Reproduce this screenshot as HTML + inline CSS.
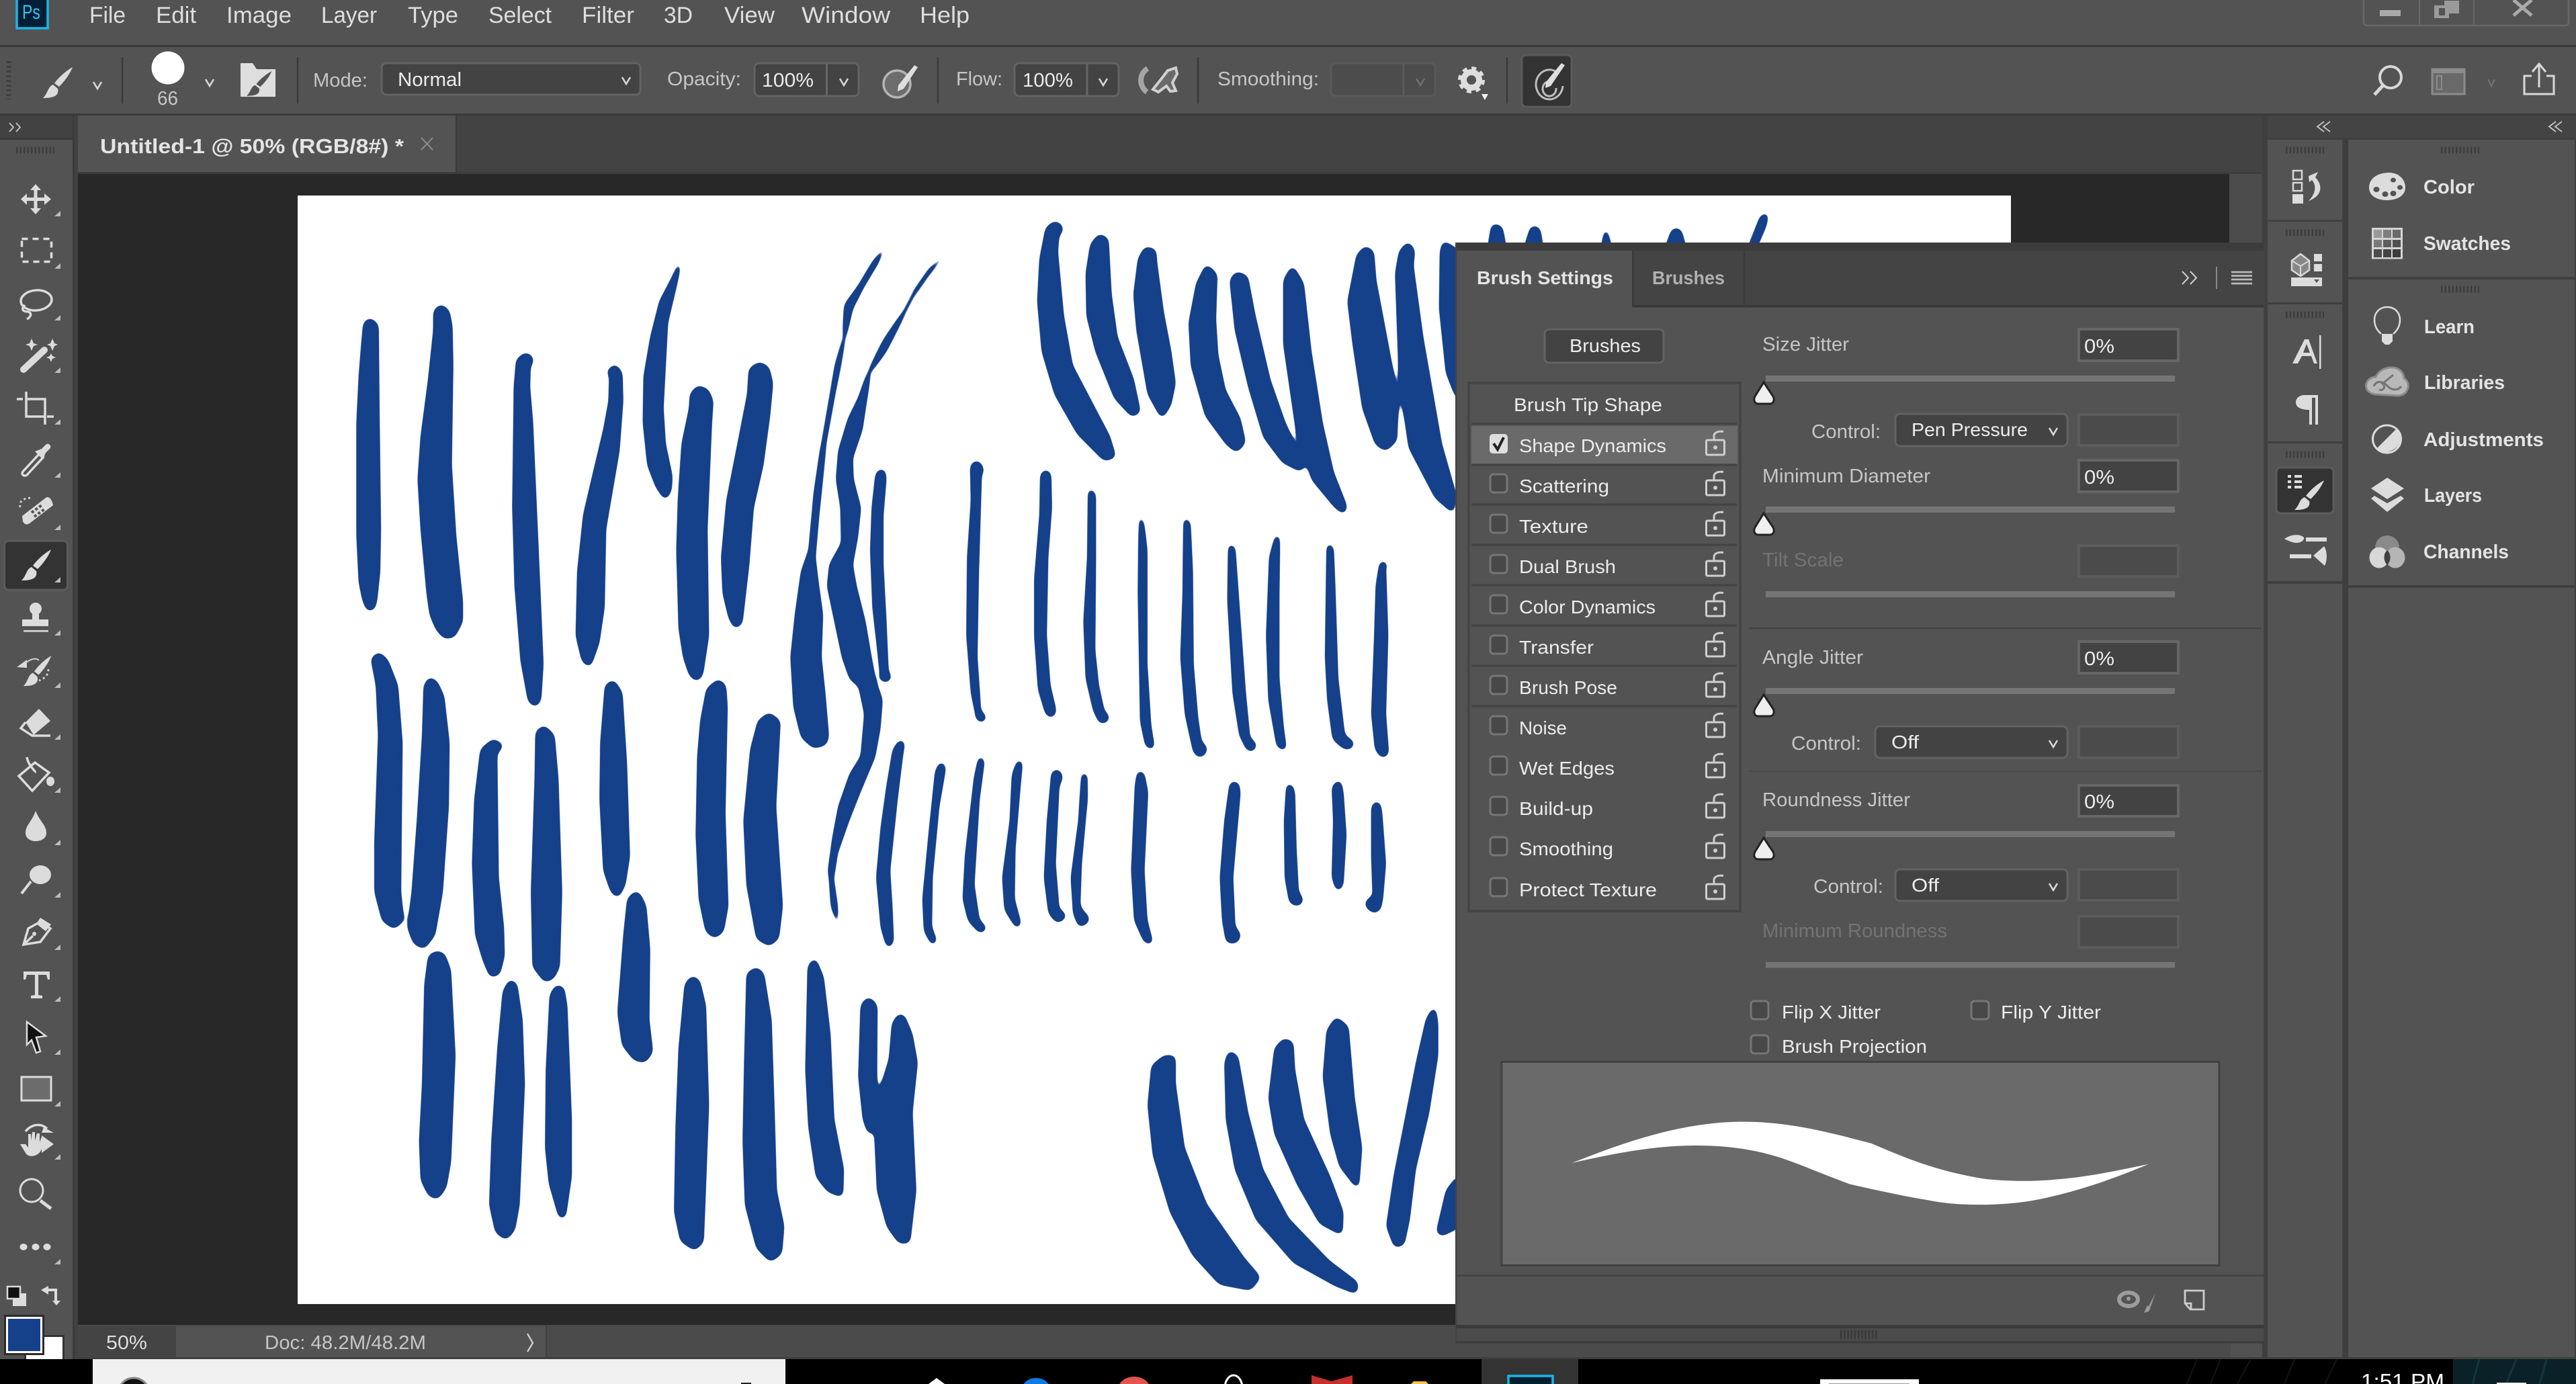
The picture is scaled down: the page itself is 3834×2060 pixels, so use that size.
<!DOCTYPE html>
<html lang="en"><head><meta charset="utf-8"><title>Photoshop - Brush Settings</title>
<style>
html,body{margin:0;padding:0;background:#535353;width:3834px;height:2060px;overflow:hidden}
svg{display:block}
text{font-family:"Liberation Sans",sans-serif;font-size:28px;fill:#d4d4d4;white-space:pre}
.m{font-size:34px;fill:#dedede}
.o{font-size:29px;fill:#c6c6c6}
.w{font-size:29px;fill:#ececec}
.b{font-weight:bold;font-size:29px;fill:#e4e4e4}
.d{fill:#737373}
.ic{fill:#dcdcdc}
.ln{fill:none;stroke:#dcdcdc;stroke-width:3.5}
.sel{fill:#434343;stroke:#636363;stroke-width:3}
.inp{fill:#434343;stroke:#666;stroke-width:4}
.dim{fill:#4b4b4b;stroke:#5c5c5c;stroke-width:4}
.sl{fill:#757575}
.cb{fill:#484848;stroke:#767676;stroke-width:3}
.grip{stroke:#3d3d3d;stroke-width:10;stroke-dasharray:2.5 3;fill:none}
.tri{fill:#bdbdbd}
.st polygon{fill:#15408a;stroke:#15408a;stroke-width:3;stroke-linejoin:round}
.st circle{fill:#15408a}
</style></head><body>
<svg width="3834" height="2060" viewBox="0 0 3834 2060" xmlns="http://www.w3.org/2000/svg">
<defs>
<g id="br"><path d="M44 0C35 5 24 14 17 24L24 29C33 20 40 10 44 0Z"/><path d="M15 26C7 29 8 38 0 46C10 46 25 45 22 32Z"/></g>
<g id="lock"><rect x="1.5" y="14" width="27" height="22" rx="2" fill="none" stroke="#cfcfcf" stroke-width="3"/><circle cx="15" cy="25" r="3" fill="#cfcfcf"/><path d="M13 14V8C13 3 19 0 27 1.5" fill="none" stroke="#cfcfcf" stroke-width="3"/></g>
<path id="th" d="M16 1L3 22C0 28 3 33 8 33H25C30 33 33 28 30 22Z" fill="#efefef" stroke="#222" stroke-width="3"/>
<path id="ch" d="M-6-5L0 5L6-5" fill="none" stroke="#d6d6d6" stroke-width="2.6"/>
<clipPath id="cv"><rect x="443" y="291" width="2550" height="1650"/></clipPath>
<filter id="sm" filterUnits="userSpaceOnUse" x="443" y="291" width="2550" height="1650" color-interpolation-filters="sRGB">
<feGaussianBlur stdDeviation="5"/>
<feComponentTransfer><feFuncA type="linear" slope="14" intercept="-5.1"/></feComponentTransfer>
</filter>
</defs>

<rect width="3834" height="2060" fill="#535353"/>
<rect y="67" width="3834" height="3" fill="#3a3a3a"/>
<rect y="169" width="3834" height="3.5" fill="#3a3a3a"/>

<!-- menu -->
<rect x="25" y="-4" width="46" height="46" fill="#001e36" stroke="#1cb5e8" stroke-width="3.5"/>
<text x="33" y="28" textLength="27" lengthAdjust="spacingAndGlyphs" style="font-size:30px;fill:#31c5f0">Ps</text>
<text class="m" x="133" y="34" textLength="54" lengthAdjust="spacingAndGlyphs">File</text>
<text class="m" x="232" y="34" textLength="60" lengthAdjust="spacingAndGlyphs">Edit</text>
<text class="m" x="337" y="34" textLength="97" lengthAdjust="spacingAndGlyphs">Image</text>
<text class="m" x="478" y="34" textLength="83" lengthAdjust="spacingAndGlyphs">Layer</text>
<text class="m" x="607" y="34" textLength="75" lengthAdjust="spacingAndGlyphs">Type</text>
<text class="m" x="727" y="34" textLength="94" lengthAdjust="spacingAndGlyphs">Select</text>
<text class="m" x="866" y="34" textLength="78" lengthAdjust="spacingAndGlyphs">Filter</text>
<text class="m" x="988" y="34" textLength="43" lengthAdjust="spacingAndGlyphs">3D</text>
<text class="m" x="1078" y="34" textLength="75" lengthAdjust="spacingAndGlyphs">View</text>
<text class="m" x="1193" y="34" textLength="132" lengthAdjust="spacingAndGlyphs">Window</text>
<text class="m" x="1369" y="34" textLength="74" lengthAdjust="spacingAndGlyphs">Help</text>

<!-- window controls -->
<path d="M3518 0V32Q3518 38 3524 38H3817Q3823 38 3823 32V0" fill="none" stroke="#676767" stroke-width="2.5"/>
<path d="M3601 0V38M3682 0V38" stroke="#676767" stroke-width="2"/>
<rect x="3542" y="15" width="31" height="9" fill="#aaa"/>
<path d="M3623 8h22v19h-22zM3638 1h22v19h-15V8h-7z" fill="#9a9a9a"/><rect x="3630" y="12" width="9" height="11" fill="#535353"/>
<path d="M3741 0L3768 23M3768 0L3741 23" stroke="#aaa" stroke-width="5"/>

<!-- options bar -->
<path d="M13 91V148" stroke="#3f3f3f" stroke-width="7" stroke-dasharray="3 4"/>
<g class="ic"><use href="#br" transform="translate(64,100)"/></g>
<use href="#ch" transform="translate(145,127)"/>
<path d="M182 85V154M443 85V154M1396 85V154M1783 85V154M2243 85V154" stroke="#3a3a3a" stroke-width="2.5"/>
<ellipse cx="250" cy="101" rx="24.5" ry="24.5" fill="#fff"/>
<text class="o" x="234" y="156" textLength="31" lengthAdjust="spacingAndGlyphs">66</text>
<use href="#ch" transform="translate(312,123)"/>
<path d="M358 94H376L382 103H410V144H358Z" fill="#dedede"/>
<g fill="#535353"><use href="#br" transform="translate(367,106) scale(.85,.8)"/></g>
<text class="o" x="466" y="129" textLength="81" lengthAdjust="spacingAndGlyphs">Mode:</text>
<rect class="sel" x="568" y="94" width="385" height="47" rx="7"/>
<text class="w" x="592" y="128" textLength="95" lengthAdjust="spacingAndGlyphs">Normal</text>
<use href="#ch" transform="translate(932,120)"/>
<text class="o" x="993" y="127" textLength="110" lengthAdjust="spacingAndGlyphs">Opacity:</text>
<rect class="sel" x="1123" y="94" width="155" height="49" rx="7"/><path d="M1230.5 94V143" stroke="#666" stroke-width="3"/>
<text class="w" x="1134" y="129" textLength="77" lengthAdjust="spacingAndGlyphs">100%</text>
<use href="#ch" transform="translate(1256,122)"/>
<circle cx="1335" cy="125" r="20" fill="#6d6d6d" stroke="#b5b5b5" stroke-width="3.5"/>
<path d="M1361 97L1366 100L1345 132L1336 136L1337 127Z" fill="#dedede"/>
<text class="o" x="1423" y="127" textLength="69" lengthAdjust="spacingAndGlyphs">Flow:</text>
<rect class="sel" x="1510" y="94" width="155" height="49" rx="7"/><path d="M1618 94V143" stroke="#666" stroke-width="3"/>
<text class="w" x="1522" y="129" textLength="75" lengthAdjust="spacingAndGlyphs">100%</text>
<use href="#ch" transform="translate(1642,122)"/>
<path d="M1708 102C1695 110 1695 128 1707 137" fill="none" stroke="#a5a5a5" stroke-width="8"/>
<path d="M1750 101L1752 110L1745 123L1750 135L1742 136L1736 128L1724 137L1716 133L1728 118L1738 105Z" fill="#6a6a6a" stroke="#d0d0d0" stroke-width="4"/>
<text class="o" x="1812" y="127" textLength="151" lengthAdjust="spacingAndGlyphs">Smoothing:</text>
<rect x="1981" y="94" width="155" height="49" rx="7" fill="#4c4c4c" stroke="#5a5a5a" stroke-width="3"/><path d="M2089 94V143" stroke="#5a5a5a" stroke-width="3"/>
<path d="M2108 117L2114 127L2120 117" fill="none" stroke="#707070" stroke-width="2.6"/>
<circle cx="2190" cy="119" r="11.5" fill="none" stroke="#dedede" stroke-width="9"/>
<circle cx="2190" cy="119" r="17.5" fill="none" stroke="#dedede" stroke-width="5" stroke-dasharray="7 6.75"/>
<path d="M2205 140H2215L2210 149Z" fill="#f0f0f0"/>
<rect x="2265" y="82" width="74" height="77" rx="6" fill="#333" stroke="#5b5b5b" stroke-width="3"/>
<path d="M2320 110A20 22 0 1 0 2326 128M2310 122A10 11 0 1 0 2316 131" fill="none" stroke="#bdbdbd" stroke-width="3"/>
<path d="M2324 94L2329 97L2308 128L2300 131L2301 122Z" fill="#dedede"/>
<circle cx="3558" cy="115" r="16" fill="none" stroke="#d8d8d8" stroke-width="4"/><path d="M3546 128L3534 141" stroke="#d8d8d8" stroke-width="5"/>
<rect x="3620" y="103" width="48" height="37" fill="#696969" stroke="#8c8c8c" stroke-width="3"/><rect x="3620" y="103" width="48" height="6" fill="#8c8c8c"/><rect x="3627" y="113" width="7" height="20" fill="none" stroke="#8c8c8c" stroke-width="2"/>
<path d="M3703 118L3708 128L3713 118" fill="none" stroke="#707070" stroke-width="2.4"/>
<path d="M3768 113H3757V140H3801V113H3790M3779 130V96M3769 107L3779 95L3789 107" fill="none" stroke="#d8d8d8" stroke-width="3"/>

<!-- tab bar + document -->
<rect x="116" y="172" width="3251" height="84" fill="#434343"/>
<rect x="116" y="256" width="3251" height="3" fill="#3c3c3c"/>
<rect x="116" y="172" width="562" height="84" fill="#535353"/>
<rect x="678" y="172" width="2" height="84" fill="#3a3a3a"/>
<text class="b" x="149" y="228" textLength="452" lengthAdjust="spacingAndGlyphs" style="font-size:31px">Untitled-1 @ 50% (RGB/8#) *</text>
<path d="M627 205L644 223M644 205L627 223" stroke="#8e8e8e" stroke-width="2"/>
<rect x="116" y="259" width="3251" height="1713" fill="#282828"/>
<rect x="3318" y="259" width="49" height="1713" fill="#4c4c4c"/>

<!-- canvas -->
<rect x="443" y="291" width="2550" height="1650" fill="#fff"/>
<g clip-path="url(#cv)"><g filter="url(#sm)"><g class="st" transform="translate(440,290) scale(1.1097,1.0587)">
<polygon points="100,175 93,180 90,215 87,255 84,320 84,480 87,545 92,570 97,583 104,582 107,570 111,530 112,470 110,300 109,183"/>
<polygon points="195,156 187,163 187,190 180,260 170,340 166,400 170,470 178,560 182,590 190,610 200,622 212,620 222,600 222,572 213,480 207,380 209,240 208,185 204,163"/>
<polygon points="308,224 298,232 295,270 293,440 296,550 304,655 314,712 322,718 327,710 330,660 326,560 316,320 312,270 313,238 318,234 314,226"/>
<polygon points="428,240 418,250 423,250 422,290 415,330 398,405 388,450 380,530 378,620 386,655 394,662 405,630 412,580 414,470 432,360 437,290 436,250"/>
<polygon points="515,95 505,120 490,150 478,200 469,255 468,320 474,380 485,410 496,427 502,415 503,395 494,350 491,300 494,240 497,180 506,140 514,105"/>
<polygon points="540,270 531,280 530,300 520,350 515,430 513,500 516,610 522,650 530,675 538,682 544,675 552,620 550,470 556,320 558,290 552,275"/>
<polygon points="622,237 610,245 608,280 595,350 580,430 573,510 575,560 583,595 590,608 597,602 606,520 612,440 625,380 634,310 638,265 633,243"/>
<polygon points="790,74 775,95 755,130 738,155 735,200 725,240 715,300 705,360 697,420 690,500 680,530 672,590 666,650 670,720 680,762 695,776 710,772 713,762 708,700 703,650 705,590 699,545 695,510 700,450 710,350 722,280 735,210 745,160 760,130 780,95"/>
<polygon points="871,84 850,105 830,135 815,165 790,205 768,250 757,285 743,315 730,360 727,400 733,440 734,490 718,520 715,550 725,600 735,650 745,680 757,690 765,730 760,790 745,815 730,860 722,905 716,950 720,1000 727,1026 725,1000 720,960 725,925 740,880 755,840 775,790 782,750 785,710 775,680 770,650 762,600 750,550 745,520 752,480 756,440 746,400 745,370 758,330 763,295 770,250 790,220 810,180 830,140 850,110"/>
<polygon points="785,387 780,392 775,440 773,500 776,580 786,672 790,682 798,678 793,672 790,600 786,520 786,450 790,400 789,388"/>
<polygon points="912,376 907,380 908,430 903,510 902,620 908,700 915,738 922,738 917,725 912,650 914,530 918,390 922,388 916,376"/>
<polygon points="1007,388 1001,392 1000,450 993,540 993,620 998,695 1008,730 1015,733 1018,725 1010,690 1005,620 1007,510 1012,440 1011,392"/>
<polygon points="1065,414 1064,510 1059,600 1062,680 1072,725 1080,742 1088,738 1083,728 1075,690 1070,640 1071,510 1071,420"/>
<polygon points="1133,452 1132,560 1135,740 1142,775 1150,778 1145,745 1140,660 1140,500 1136,460"/>
<polygon points="1193,455 1192,560 1189,650 1195,730 1205,778 1213,790 1221,778 1213,770 1208,735 1202,660 1201,530 1198,460"/>
<polygon points="1253,492 1252,570 1259,700 1268,760 1278,780 1287,772 1278,765 1272,700 1263,570 1258,495"/>
<polygon points="1316,478 1308,510 1304,620 1307,710 1318,775 1327,780 1323,750 1317,680 1317,560 1318,480"/>
<polygon points="1385,491 1383,650 1386,710 1393,765 1408,778 1417,772 1405,760 1396,680 1392,550 1390,495"/>
<polygon points="1456,516 1451,550 1449,620 1445,730 1450,780 1458,790 1464,786 1460,730 1463,620 1460,520 1464,519"/>
<polygon points="112,645 103,652 110,690 113,760 108,910 108,980 118,1020 132,1030 143,1020 139,980 140,870 141,770 135,690 122,655"/>
<polygon points="180,680 174,690 172,760 165,880 158,980 152,1030 160,1052 172,1058 185,1040 195,980 203,860 204,770 197,705 188,685"/>
<polygon points="265,767 250,780 242,850 239,940 243,1040 253,1075 262,1098 272,1095 278,1070 277,1030 270,960 268,785 277,774"/>
<polygon points="333,748 324,755 323,820 318,980 320,1085 335,1105 345,1100 352,1085 355,980 350,820 345,760"/>
<polygon points="426,684 417,690 411,770 410,850 415,950 425,980 432,986 440,970 446,930 442,800 436,700"/>
<polygon points="567,683 553,695 545,740 541,790 539,900 543,990 552,1035 562,1043 572,1035 578,1000 574,870 577,720 575,690"/>
<polygon points="635,730 622,740 612,780 603,880 607,970 620,1045 635,1054 646,1045 651,1000 642,860 648,740"/>
<polygon points="456,981 447,990 442,1040 434,1150 440,1195 455,1215 468,1218 477,1205 472,1160 473,1060 468,1000 460,983"/>
<polygon points="812,767 803,780 795,830 787,890 781,960 787,1030 795,1058 800,1050 798,1000 795,950 805,850 812,790 815,770"/>
<polygon points="866,798 860,810 852,890 843,990 845,1035 855,1054 858,1048 851,1030 852,960 861,860 870,805"/>
<polygon points="918,790 912,820 900,930 897,990 904,1020 918,1036 925,1032 915,1020 908,970 915,850 922,795"/>
<polygon points="970,795 963,815 960,880 950,960 953,1005 968,1030 971,1025 962,990 963,920 970,830 973,797"/>
<polygon points="1016,811 1010,880 1006,960 1012,1010 1022,1022 1032,1015 1022,1005 1017,940 1022,830 1027,820 1024,810"/>
<polygon points="1056,813 1052,880 1042,960 1045,1010 1052,1028 1062,1020 1050,1000 1052,940 1060,850 1060,815"/>
<polygon points="1131,811 1128,830 1123,950 1127,1020 1140,1050 1148,1052 1140,1020 1136,950 1141,840 1136,813"/>
<polygon points="1255,827 1248,880 1242,960 1245,1020 1250,1050 1262,1050 1266,1040 1258,1030 1255,960 1265,840 1263,827"/>
<polygon points="1331,829 1328,880 1329,960 1335,995 1345,998 1350,992 1343,980 1340,920 1338,840 1335,830"/>
<polygon points="1400,824 1392,832 1394,880 1392,960 1398,978 1403,970 1407,900 1403,840"/>
<polygon points="1449,854 1445,860 1445,930 1447,990 1437,995 1445,1008 1453,1005 1456,990 1460,940 1455,870 1453,856"/>
<polygon points="190,1065 180,1070 175,1110 172,1250 168,1330 170,1385 180,1406 190,1410 200,1395 206,1360 212,1210 206,1090 198,1068"/>
<polygon points="288,1105 280,1120 273,1200 265,1330 262,1420 270,1458 282,1467 292,1455 298,1420 305,1250 302,1160 295,1110"/>
<polygon points="350,1113 343,1125 338,1230 337,1340 342,1390 355,1437 360,1437 368,1380 368,1300 362,1140 358,1115"/>
<polygon points="532,1100 524,1110 516,1200 512,1310 510,1430 518,1470 535,1482 545,1472 547,1420 552,1280 548,1140 540,1105"/>
<polygon points="618,1088 607,1095 604,1220 602,1330 605,1420 620,1480 637,1498 650,1488 653,1450 643,1400 640,1290 636,1160 626,1095"/>
<polygon points="696,1075 689,1085 686,1230 690,1310 700,1380 715,1400 732,1407 733,1370 720,1300 715,1180 706,1100"/>
<polygon points="766,1131 760,1140 757,1240 763,1300 770,1320 777,1305 778,1140 772,1132"/>
<polygon points="810,1153 802,1165 798,1215 785,1260 778,1310 782,1400 795,1450 810,1472 822,1472 830,1400 825,1290 832,1220 825,1180 815,1155"/>
<polygon points="1018,39 1008,47 1000,90 997,150 1003,220 1020,280 1050,335 1085,372 1098,368 1090,340 1060,280 1040,240 1028,170 1020,80 1022,55 1028,50 1025,42"/>
<polygon points="1078,57 1068,70 1062,110 1063,170 1075,220 1100,285 1122,310 1131,305 1122,260 1100,200 1092,140 1088,62"/>
<polygon points="1140,75 1132,90 1126,140 1130,190 1145,280 1162,312 1172,295 1178,265 1172,220 1162,165 1153,95 1152,78"/>
<polygon points="1222,100 1210,125 1200,180 1203,240 1222,310 1250,350 1262,360 1272,348 1265,315 1245,275 1235,225 1232,175 1234,112"/>
<polygon points="1262,110 1255,120 1262,190 1280,270 1300,340 1325,375 1348,387 1351,380 1325,320 1305,260 1285,170 1275,115"/>
<polygon points="1337,102 1327,120 1327,210 1345,340 1365,400 1395,438 1406,447 1408,438 1390,390 1375,320 1360,220 1350,125"/>
<polygon points="1435,74 1425,85 1413,150 1420,210 1433,300 1450,350 1462,358 1475,345 1477,290 1465,220 1447,120 1444,80"/>
<polygon points="1492,68 1482,80 1477,110 1482,260 1495,355 1530,425 1552,445 1554,420 1535,350 1510,200 1497,100 1499,78"/>
<polygon points="1540,67 1537,80 1536,160 1545,250 1560,290 1560,80 1545,70"/>
<polygon points="1165,1212 1150,1225 1145,1280 1152,1350 1175,1430 1205,1490 1240,1530 1280,1538 1292,1522 1270,1495 1220,1420 1190,1340 1178,1250 1178,1212"/>
<polygon points="1253,1205 1248,1220 1250,1300 1262,1370 1290,1440 1340,1500 1395,1532 1422,1543 1423,1530 1385,1500 1330,1440 1295,1370 1275,1290 1262,1212"/>
<polygon points="1326,1188 1315,1200 1307,1270 1315,1320 1345,1390 1375,1445 1402,1460 1403,1430 1385,1380 1350,1300 1338,1230 1336,1192"/>
<polygon points="1396,1158 1385,1175 1380,1240 1390,1320 1402,1365 1424,1395 1428,1340 1418,1270 1410,1170"/>
<polygon points="1527,1143 1518,1160 1505,1220 1490,1300 1475,1380 1465,1450 1475,1478 1485,1475 1492,1440 1500,1370 1518,1290 1530,1210 1530,1165"/>
<polygon points="1560,1380 1545,1400 1532,1458 1537,1462 1560,1450"/>
<circle cx="791" cy="678" r="7"/><circle cx="920" cy="735" r="6"/><circle cx="1013" cy="728" r="6"/><circle cx="1084" cy="735" r="7"/><circle cx="1213" cy="780" r="9"/><circle cx="1281" cy="775" r="7"/><circle cx="1412" cy="772" r="7"/><circle cx="1026" cy="1013" r="6"/><circle cx="1056" cy="1018" r="8"/><circle cx="921" cy="1031" r="5"/><circle cx="1257" cy="1042" r="9"/><circle cx="1444" cy="997" r="9"/><circle cx="1346" cy="992" r="5"/>
</g>
<g class="st">
<polygon points="2216,370 2222,335 2234,338 2240,370"/>
<polygon points="2270,370 2280,338 2290,340 2295,370"/>
<polygon points="2385,370 2390,340 2397,370"/>
<polygon points="2480,370 2490,342 2500,342 2508,370"/>
<polygon points="2603,370 2622,322 2630,318 2627,335 2612,370"/>
</g></g></g>

<!-- status bar -->
<rect x="116" y="1972" width="3251" height="48" fill="#4b4b4b"/>
<rect x="116" y="1974" width="146" height="46" fill="#444"/>
<rect x="262" y="1974" width="550" height="46" fill="#535353"/>
<rect x="812" y="1972" width="2" height="48" fill="#404040"/>
<rect x="3320" y="1972" width="47" height="48" fill="#525252"/>
<rect y="2020" width="3834" height="3" fill="#3f3f3f"/>
<text class="o" x="158" y="2008" textLength="61" lengthAdjust="spacingAndGlyphs" style="fill:#dedede">50%</text>
<text class="o" x="394" y="2008" textLength="240" lengthAdjust="spacingAndGlyphs">Doc: 48.2M/48.2M</text>
<path d="M785 1985L793 1999L785 2012" fill="none" stroke="#ccc" stroke-width="2.4"/>

<!-- left tool bar -->
<rect x="0" y="172" width="108" height="33" fill="#424242"/>
<rect x="0" y="205" width="108" height="3" fill="#3a3a3a"/>
<rect x="0" y="208" width="108" height="1815" fill="#535353"/>
<rect x="108" y="172" width="8" height="1851" fill="#414141"/>
<rect x="108" y="172" width="2.5" height="1851" fill="#3b3b3b"/>
<path d="M14 183L20 189.5L14 196M24 183L30 189.5L24 196" fill="none" stroke="#c8c8c8" stroke-width="1.8"/>
<path d="M24 223.5H81" class="grip"/>
<g id="tools">
<path class="ic" d="M53 274L61 283H55.500V294H66V288L76 296.500L66 305V299H55.500V310H61L53 319L45 310H50.500V299H40V305L31 296.500L40 288V294H50.500V283H45Z"/>
<rect x="32.500" y="355.500" width="44" height="34" fill="none" stroke="#dcdcdc" stroke-width="3.500" stroke-dasharray="9 7"/>
<ellipse cx="54" cy="447" rx="23" ry="15" fill="none" stroke="#dcdcdc" stroke-width="3.500" transform="rotate(-5 54 447)"/>
<path class="ln" d="M37 454C30 462 36 464 42 464C48 466 46 472 40 475"/>
<path d="M35 550L66 521" stroke="#dcdcdc" stroke-width="10" stroke-linecap="round"/>
<path class="ic" d="M47 504L50 511L56 513L50 515L47 522L44 515L38 513L44 511ZM78 504L81 511L86 513L81 515L78 522L75 515L70 513L75 511ZM76 526L78 530L83 532L78 534L76 539L74 534L69 532L74 530Z"/>
<path class="ln" d="M25 594H34M39 583V620H67M41 594H67V632M70 620H80" stroke-width="4"/>
<path class="ln" d="M34 702L58 676L64 681L40 707C36 710 31 706 34 702Z"/>
<path class="ic" d="M52 672L62 668L68 662C72 658 78 664 74 668L68 674L64 684Z"/>
<path class="ic" d="M33 768L68 741C72 738 76 742 78 748L79 752L44 779C39 782 36 780 34 776Z"/>
<path d="M47 763L62 752M51 769L66 758" stroke="#535353" stroke-width="4" stroke-dasharray="4 3"/>
<path d="M30 755C28 745 36 741 48 741" fill="none" stroke="#cfcfcf" stroke-width="3" stroke-dasharray="3 4"/>
<rect x="6.500" y="805" width="94" height="73" rx="6" fill="#333" stroke="#5c5c5c" stroke-width="3"/>
<g class="ic"><use href="#br" transform="translate(32,818)"/></g>
<circle class="ic" cx="53" cy="906" r="9"/><path class="ic" d="M48 908H58V922H72V932H33V922H48Z"/><rect class="ic" x="35" y="938" width="37" height="2.500"/>
<g class="ic"><use href="#br" transform="translate(35,976) scale(.94,.98)"/></g>
<path class="ic" d="M25 993L40 982V994Z"/><path d="M38 987C46 980 54 979 58 983" fill="none" stroke="#cfcfcf" stroke-width="2"/>
<path d="M72 996C72 1005 66 1010 58 1013" fill="none" stroke="#cfcfcf" stroke-width="3" stroke-dasharray="3 4"/>
<path class="ic" d="M58 1055L75 1073L50 1094L38 1075Z"/><path class="ln" d="M38 1075L31 1084L48 1095H75" stroke-width="3"/>
<path class="ln" d="M28 1155L52 1135L73 1150L48 1177Z"/><path class="ln" d="M40 1127C42 1140 54 1148 52 1150" stroke-width="3"/><ellipse class="ic" cx="75" cy="1163" rx="6" ry="7"/>
<path class="ic" d="M53 1207C47 1224 38 1228 38 1240C38 1248 46 1252 53 1252C61 1252 69 1248 69 1240C69 1228 60 1224 53 1207Z"/>
<ellipse class="ic" cx="60" cy="1302" rx="16" ry="14"/><path d="M46 1312L32 1330" stroke="#dcdcdc" stroke-width="4"/>
<path class="ln" d="M35 1406L42 1382L60 1372L75 1382L60 1402Z" stroke-width="3"/><path class="ic" d="M60 1366L76 1376L68 1386L54 1375Z"/><circle class="ic" cx="51" cy="1390" r="3"/><path class="ln" d="M36 1405L49 1393" stroke-width="2"/>
<path class="ic" d="M35 1446H74V1458H71L69 1451H57V1481L63 1482V1486H46V1482L52 1481V1451H40L38 1458H35Z"/>
<path d="M40 1521L68 1542L54 1544L60 1565L54 1567L47 1548L40 1555Z" fill="#111" stroke="#dcdcdc" stroke-width="2.500"/>
<rect x="32" y="1603" width="44" height="35" fill="#6c6c6c" stroke="#dcdcdc" stroke-width="3"/>
<path class="ic" d="M30 1703L38 1703L42 1708L42 1688H46V1698L48 1685H52V1698L55 1687H59V1700L62 1692L66 1694L62 1710C58 1722 42 1724 38 1716Z"/>
<path class="ic" d="M62 1690L80 1703L62 1716Z"/>
<path class="ln" d="M38 1684C48 1672 62 1672 70 1680" stroke-width="2"/><path class="ic" d="M65 1678L80 1686H62Z"/>
<circle cx="47" cy="1772" r="17" fill="none" stroke="#dcdcdc" stroke-width="3"/><path d="M60 1787L76 1799" stroke="#dcdcdc" stroke-width="5"/>
<ellipse class="ic" cx="35" cy="1856" rx="5.500" ry="5"/><ellipse class="ic" cx="53" cy="1856" rx="5.500" ry="5"/><ellipse class="ic" cx="70" cy="1856" rx="5.500" ry="5"/>
</g>
<path class="tri" d="M90 322H81L90 314ZM90 400H81L90 392ZM90 477H81L90 469ZM90 555H81L90 547ZM90 632H81L90 624ZM90 711H81L90 703ZM90 789H81L90 781ZM90 867H81L90 859ZM90 946H81L90 938ZM90 1024H81L90 1016ZM90 1101H81L90 1093ZM90 1180H81L90 1172ZM90 1258H81L90 1250ZM90 1336H81L90 1328ZM90 1414H81L90 1406ZM90 1491H81L90 1483ZM90 1570H81L90 1562ZM90 1647H81L90 1639ZM90 1726H81L90 1718ZM90 1882H81L90 1874Z"/>
<rect x="19" y="1925" width="20" height="19" fill="#dcdcdc"/>
<rect x="11" y="1915" width="19" height="18" fill="#111" stroke="#dcdcdc" stroke-width="2.500"/>
<path class="ic" d="M61 1920L72 1914V1918H85V1936H90L84 1943L78 1936H81V1922H72V1927Z"/>
<rect x="36" y="1987" width="60" height="40" fill="#333"/><rect x="39" y="1990" width="54" height="33" fill="#fff"/>
<rect x="6" y="1957" width="60" height="60" fill="#2b2b2b"/><rect x="9" y="1960" width="54" height="54" fill="#fff"/><rect x="12" y="1963" width="48" height="48" fill="#15408a"/>

<!-- dock -->
<rect x="3367" y="172" width="467" height="1851" fill="#3f3f3f"/>
<rect x="3375" y="172" width="459" height="33" fill="#444"/>
<rect x="3375" y="208" width="111" height="119.500" fill="#535353"/>
<rect x="3375" y="330" width="111" height="120" fill="#535353"/>
<rect x="3375" y="453" width="111" height="204" fill="#535353"/>
<rect x="3375" y="660" width="111" height="205" fill="#535353"/>
<rect x="3375" y="869" width="111" height="1151" fill="#535353"/>
<rect x="3495" y="208" width="337" height="204" fill="#535353"/>
<rect x="3495" y="416" width="337" height="455" fill="#535353"/>
<rect x="3495" y="875" width="337" height="1145" fill="#535353"/>
<rect y="2020" x="3367" width="467" height="3" fill="#3f3f3f"/>
<path d="M3468 181L3458 188.500L3468 196M3459 181L3449 188.500L3459 196" fill="none" stroke="#c8c8c8" stroke-width="1.800"/>
<path d="M3813 181L3803 188.500L3813 196M3804 181L3794 188.500L3804 196" fill="none" stroke="#c8c8c8" stroke-width="1.800"/>
<path class="grip" d="M3402 223.500H3459M3633 223.500H3690M3633 430.500H3690M3402 346.500H3459M3402 468.500H3459M3402 676.500H3459"/>
<!-- strip icons -->
<rect x="3413" y="254" width="13" height="13" fill="none" stroke="#d8d8d8" stroke-width="2.500"/><rect x="3413" y="272" width="13" height="12" fill="none" stroke="#d8d8d8" stroke-width="2.500"/><rect class="ic" x="3412" y="289" width="16" height="14"/>
<path class="ic" d="M3436 262L3450 256L3446 264C3458 276 3456 292 3436 299C3447 288 3448 276 3441 268L3437 271Z"/>
<path d="M3411 388L3424 378L3437 388V402L3424 411L3411 402Z" fill="#888" stroke="#d8d8d8" stroke-width="2.500"/><path d="M3411 388L3424 396L3437 388M3424 396V411" fill="none" stroke="#d8d8d8" stroke-width="2"/>
<rect class="ic" x="3444" y="378" width="12" height="11"/><rect class="ic" x="3444" y="393" width="12" height="11"/><rect class="ic" x="3410" y="413" width="46" height="13"/><path d="M3444 416H3452L3448 421Z" fill="#535353"/>
<path class="ic" d="M3412 541L3430 505H3436L3449 541H3444L3440 530H3426L3420 541ZM3428 525H3438L3433 512Z"/><rect class="ic" x="3452" y="499" width="2.500" height="50"/>
<path class="ic" d="M3430 588H3450V632H3446V592H3441V632H3437V610C3424 610 3417 606 3417 599C3417 592 3423 588 3430 588Z"/>
<rect x="3388" y="696" width="85" height="68" rx="6" fill="#333" stroke="#5c5c5c" stroke-width="3"/>
<path d="M3405 709H3410M3405 717H3410M3405 725H3410M3415 709H3426M3415 717H3426M3415 725H3426" stroke="#dcdcdc" stroke-width="4"/>
<g class="ic"><use href="#br" transform="translate(3415,715) scale(1,.96)"/></g>
<path class="ic" d="M3400 802C3412 794 3424 795 3429 800C3430 806 3420 810 3412 807C3408 806 3404 804 3400 802ZM3432 800H3463V806H3432ZM3408 825H3440V831H3408ZM3443 827L3459 813C3464 820 3464 834 3460 842Z"/>
<!-- right dock icons -->
<path class="ic" d="M3526 279C3526 266 3538 257 3556 257C3570 257 3580 267 3580 279C3580 291 3568 298 3553 298C3538 298 3526 292 3526 279Z"/>
<g fill="#535353"><ellipse cx="3537" cy="282" rx="4.500" ry="4"/><ellipse cx="3550" cy="289" rx="4.500" ry="4"/><ellipse cx="3562" cy="288" rx="4.500" ry="4"/><ellipse cx="3572" cy="279" rx="4" ry="3.500"/><ellipse cx="3562" cy="268" rx="4" ry="3.500"/></g>
<rect x="3530" y="339" width="46" height="46.500" fill="#d4d4d4"/>
<g><rect x="3533" y="342" width="12" height="12" fill="#9a9a9a"/><rect x="3547" y="342" width="12" height="12" fill="#7e7e7e"/><rect x="3561" y="342" width="12" height="12" fill="#6a6a6a"/><rect x="3533" y="357" width="12" height="11" fill="#7a7a7a"/><rect x="3547" y="357" width="12" height="11" fill="#5e5e5e"/><rect x="3561" y="357" width="12" height="11" fill="#505050"/><rect x="3533" y="371" width="12" height="12" fill="#4c4c4c"/><rect x="3547" y="371" width="12" height="12" fill="#444"/><rect x="3561" y="371" width="12" height="12" fill="#3c3c3c"/></g>
<path d="M3544 497C3537 491 3534 484 3534 476C3534 465 3542 457 3553 457C3564 457 3572 465 3572 476C3572 484 3569 491 3562 497" fill="none" stroke="#dcdcdc" stroke-width="2.500"/>
<path class="ic" d="M3545 497H3561V508L3556 513H3550L3545 508Z"/>
<path d="M3535 587C3524 585 3520 578 3522 571C3524 564 3530 561 3536 561C3540 552 3550 546 3562 547C3572 548 3578 556 3578 563C3584 567 3586 574 3583 580C3580 587 3574 589 3568 589Z" fill="#b8b8b8" stroke="#8a8a8a" stroke-width="3"/>
<path d="M3533 575C3537 565 3547 568 3553 574C3558 580 3568 583 3574 575M3541 580C3547 582 3552 576 3546 571L3562 558" fill="none" stroke="#747474" stroke-width="3"/>
<ellipse cx="3552.500" cy="653.500" rx="21" ry="20.500" fill="none" stroke="#dcdcdc" stroke-width="3"/>
<path class="ic" d="M3537 668L3567 638C3578 648 3575 668 3552 673C3546 673 3541 671 3537 668Z"/>
<path class="ic" d="M3553 711L3578 727L3553 743L3529 727Z"/>
<path class="ic" d="M3534 738L3553 749L3573 738L3578 742L3553 762L3529 742Z"/>
<circle cx="3553" cy="815" r="18" fill="#8a8a8a"/><ellipse cx="3541" cy="830" rx="14.500" ry="15.500" fill="#d8d8d8"/><ellipse cx="3565" cy="830" rx="14.500" ry="15.500" fill="#b5b5b5"/><path d="M3553 819C3560 825 3558 836 3553 841C3548 836 3546 825 3553 819Z" fill="#3f3f3f"/>
<text class="b" x="3607" y="288" textLength="76" lengthAdjust="spacingAndGlyphs">Color</text>
<text class="b" x="3607" y="372" textLength="130" lengthAdjust="spacingAndGlyphs">Swatches</text>
<text class="b" x="3608" y="496" textLength="75" lengthAdjust="spacingAndGlyphs">Learn</text>
<text class="b" x="3608" y="579" textLength="120" lengthAdjust="spacingAndGlyphs">Libraries</text>
<text class="b" x="3607" y="664" textLength="179" lengthAdjust="spacingAndGlyphs">Adjustments</text>
<text class="b" x="3608" y="747" textLength="86" lengthAdjust="spacingAndGlyphs">Layers</text>
<text class="b" x="3607" y="831" textLength="127" lengthAdjust="spacingAndGlyphs">Channels</text>

<!-- brush settings panel -->
<rect x="2166" y="361" width="1204" height="1638" fill="#535353"/>
<rect x="2166" y="361" width="1204" height="12" fill="#3c3c3c"/>
<rect x="2167" y="373" width="1203" height="81" fill="#444"/>
<rect x="2429" y="454" width="941" height="3.500" fill="#363636"/>
<rect x="2167" y="373" width="262" height="84" fill="#535353"/>
<rect x="2429" y="373" width="2.500" height="84" fill="#3a3a3a"/><rect x="2595" y="373" width="2" height="84" fill="#3a3a3a"/>
<rect x="2166" y="361" width="2.500" height="1638" fill="#434343"/><rect x="3369" y="361" width="2.500" height="1638" fill="#434343"/>
<text class="b" x="2198" y="423" textLength="203" lengthAdjust="spacingAndGlyphs" style="font-size:28px">Brush Settings</text>
<text class="b" x="2459" y="423" textLength="108" lengthAdjust="spacingAndGlyphs" style="font-size:28px;fill:#b0b0b0">Brushes</text>
<path d="M3248 404L3257 413.500L3248 423M3260 404L3269 413.500L3260 423" fill="none" stroke="#d0d0d0" stroke-width="2"/>
<path d="M3299 397V430" stroke="#888" stroke-width="2"/>
<path d="M3321 405H3352M3321 410.500H3352M3321 416H3352M3321 422H3352" stroke="#b8b8b8" stroke-width="2.800"/>

<rect class="sel" x="2299" y="490" width="177" height="50" rx="7"/>
<text class="w" x="2336" y="524" textLength="106" lengthAdjust="spacingAndGlyphs" style="font-size:28px">Brushes</text>

<!-- option list -->
<rect x="2186" y="570" width="404" height="786" fill="none" stroke="#454545" stroke-width="4"/>
<rect x="2190" y="629" width="395" height="3" fill="#444"/>
<text class="w" x="2253" y="612" textLength="221" lengthAdjust="spacingAndGlyphs" style="font-size:28px">Brush Tip Shape</text>
<rect x="2190" y="634" width="396" height="57" fill="#6a6a6a"/>
<path d="M2190 692H2585M2190 751H2585M2190 811H2585M2190 871H2585M2190 931H2585M2190 991H2585M2190 1051H2585" stroke="#444" stroke-width="3.500"/>
<rect x="2217" y="646" width="27" height="29" rx="5" fill="#dedede"/>
<path d="M2223 660L2229 669L2238 651" fill="none" stroke="#222" stroke-width="4"/>
<g id="list">
<text class="w" x="2261" y="673" textLength="219" lengthAdjust="spacingAndGlyphs" style="font-size:28px">Shape Dynamics</text>
<text class="w" x="2261" y="733" textLength="134" lengthAdjust="spacingAndGlyphs" style="font-size:28px">Scattering</text>
<text class="w" x="2261" y="793" textLength="103" lengthAdjust="spacingAndGlyphs" style="font-size:28px">Texture</text>
<text class="w" x="2261" y="853" textLength="144" lengthAdjust="spacingAndGlyphs" style="font-size:28px">Dual Brush</text>
<text class="w" x="2261" y="913" textLength="203" lengthAdjust="spacingAndGlyphs" style="font-size:28px">Color Dynamics</text>
<text class="w" x="2261" y="973" textLength="111" lengthAdjust="spacingAndGlyphs" style="font-size:28px">Transfer</text>
<text class="w" x="2261" y="1033" textLength="146" lengthAdjust="spacingAndGlyphs" style="font-size:28px">Brush Pose</text>
<text class="w" x="2261" y="1093" textLength="71" lengthAdjust="spacingAndGlyphs" style="font-size:28px">Noise</text>
<text class="w" x="2261" y="1153" textLength="142" lengthAdjust="spacingAndGlyphs" style="font-size:28px">Wet Edges</text>
<text class="w" x="2261" y="1213" textLength="110" lengthAdjust="spacingAndGlyphs" style="font-size:28px">Build-up</text>
<text class="w" x="2261" y="1273" textLength="140" lengthAdjust="spacingAndGlyphs" style="font-size:28px">Smoothing</text>
<text class="w" x="2261" y="1334" textLength="205" lengthAdjust="spacingAndGlyphs" style="font-size:28px">Protect Texture</text>
</g>
<rect class="cb" x="2218" y="706" width="25" height="27" rx="5"/><rect class="cb" x="2218" y="766" width="25" height="27" rx="5"/><rect class="cb" x="2218" y="826" width="25" height="27" rx="5"/><rect class="cb" x="2218" y="886" width="25" height="27" rx="5"/><rect class="cb" x="2218" y="946" width="25" height="27" rx="5"/><rect class="cb" x="2218" y="1006" width="25" height="27" rx="5"/><rect class="cb" x="2218" y="1066" width="25" height="27" rx="5"/><rect class="cb" x="2218" y="1126" width="25" height="27" rx="5"/><rect class="cb" x="2218" y="1186" width="25" height="27" rx="5"/><rect class="cb" x="2218" y="1246" width="25" height="27" rx="5"/><rect class="cb" x="2218" y="1307" width="25" height="27" rx="5"/>
<use href="#lock" x="2538" y="641"/><use href="#lock" x="2538" y="701"/><use href="#lock" x="2538" y="761"/><use href="#lock" x="2538" y="821"/><use href="#lock" x="2538" y="881"/><use href="#lock" x="2538" y="941"/><use href="#lock" x="2538" y="1001"/><use href="#lock" x="2538" y="1061"/><use href="#lock" x="2538" y="1121"/><use href="#lock" x="2538" y="1181"/><use href="#lock" x="2538" y="1241"/><use href="#lock" x="2538" y="1302"/>

<!-- right settings -->
<text class="o" x="2623" y="522" textLength="129" lengthAdjust="spacingAndGlyphs">Size Jitter</text>
<rect class="inp" x="3094" y="490" width="148" height="47"/>
<text class="w" x="3102" y="525" textLength="45" lengthAdjust="spacingAndGlyphs">0%</text>
<rect class="sl" x="2628" y="559" width="609" height="9"/>
<use href="#th" x="2609" y="568"/>
<text class="o" x="2696" y="652" textLength="103" lengthAdjust="spacingAndGlyphs">Control:</text>
<rect class="sel" x="2821" y="616" width="256" height="48" rx="7"/>
<text class="w" x="2845" y="649" textLength="173" lengthAdjust="spacingAndGlyphs" style="font-size:28px">Pen Pressure</text>
<use href="#ch" transform="translate(3056,642)"/>
<rect class="dim" x="3094" y="617" width="148" height="46"/>
<text class="o" x="2623" y="718" textLength="250" lengthAdjust="spacingAndGlyphs">Minimum Diameter</text>
<rect class="inp" x="3094" y="685" width="148" height="47"/>
<text class="w" x="3102" y="720" textLength="45" lengthAdjust="spacingAndGlyphs">0%</text>
<rect class="sl" x="2628" y="754" width="609" height="9"/>
<use href="#th" x="2609" y="763"/>
<text class="o d" x="2623" y="843" textLength="121" lengthAdjust="spacingAndGlyphs" style="fill:#737373">Tilt Scale</text>
<rect class="dim" x="3094" y="812" width="148" height="46"/>
<rect class="sl" x="2628" y="880" width="609" height="9"/>
<rect x="2603" y="934" width="763" height="2.500" fill="#444"/>
<text class="o" x="2623" y="988" textLength="150" lengthAdjust="spacingAndGlyphs">Angle Jitter</text>
<rect class="inp" x="3094" y="955" width="148" height="47"/>
<text class="w" x="3102" y="990" textLength="45" lengthAdjust="spacingAndGlyphs">0%</text>
<rect class="sl" x="2628" y="1024" width="609" height="9"/>
<use href="#th" x="2609" y="1033"/>
<text class="o" x="2666" y="1116" textLength="104" lengthAdjust="spacingAndGlyphs">Control:</text>
<rect class="sel" x="2791" y="1081" width="286" height="47" rx="7"/>
<text class="w" x="2815" y="1114" textLength="41" lengthAdjust="spacingAndGlyphs" style="font-size:28px">Off</text>
<use href="#ch" transform="translate(3056,1107)"/>
<rect class="dim" x="3094" y="1081" width="148" height="47"/>
<rect x="2603" y="1147" width="763" height="1.500" fill="#444"/>
<text class="o" x="2623" y="1200" textLength="220" lengthAdjust="spacingAndGlyphs">Roundness Jitter</text>
<rect class="inp" x="3094" y="1169" width="148" height="46"/>
<text class="w" x="3102" y="1203" textLength="45" lengthAdjust="spacingAndGlyphs">0%</text>
<rect class="sl" x="2628" y="1237" width="609" height="9"/>
<use href="#th" x="2609" y="1246"/>
<text class="o" x="2699" y="1329" textLength="104" lengthAdjust="spacingAndGlyphs">Control:</text>
<rect class="sel" x="2821" y="1294" width="256" height="47" rx="7"/>
<text class="w" x="2845" y="1327" textLength="41" lengthAdjust="spacingAndGlyphs" style="font-size:28px">Off</text>
<use href="#ch" transform="translate(3056,1320)"/>
<rect class="dim" x="3094" y="1294" width="148" height="46"/>
<text class="o" x="2623" y="1395" textLength="275" lengthAdjust="spacingAndGlyphs" style="fill:#737373">Minimum Roundness</text>
<rect class="dim" x="3094" y="1364" width="148" height="46"/>
<rect class="sl" x="2628" y="1432" width="609" height="8.500"/>
<rect class="cb" x="2606" y="1490" width="26" height="27" rx="5"/>
<text class="w" x="2652" y="1516" textLength="147" lengthAdjust="spacingAndGlyphs" style="font-size:28px">Flip X Jitter</text>
<rect class="cb" x="2934" y="1490" width="26" height="27" rx="5"/>
<text class="w" x="2978" y="1516" textLength="149" lengthAdjust="spacingAndGlyphs" style="font-size:28px">Flip Y Jitter</text>
<rect class="cb" x="2606" y="1541" width="26" height="27" rx="5"/>
<text class="w" x="2652" y="1567" textLength="216" lengthAdjust="spacingAndGlyphs" style="font-size:28px">Brush Projection</text>

<!-- preview -->
<rect x="2235" y="1580.500" width="1068" height="303" fill="#6a6a6a" stroke="#414141" stroke-width="3"/>
<path transform="translate(2160,1500) scale(.7908,.3571)" fill="#fff" d="M227 647C300 585 420 475 550 475C640 475 720 525 790 565C840 610 900 675 1000 712C1040 724 1100 725 1140 715C1200 705 1260 675 1312 652C1260 700 1180 770 1090 805C1040 823 960 830 900 803C850 785 800 760 750 735C700 695 660 655 620 625C570 590 520 574 460 574C380 574 300 610 227 647Z"/>
<rect x="2168" y="1897" width="1201" height="3" fill="#444"/>
<ellipse cx="3168" cy="1934" rx="14" ry="10" fill="none" stroke="#9c9c9c" stroke-width="6"/><circle cx="3168" cy="1933" r="3" fill="#9c9c9c"/>
<path d="M3208 1925L3198 1944L3201 1945ZM3196 1943L3191 1954L3198 1952L3201 1946Z" fill="#9c9c9c"/>
<path d="M3252 1921H3280V1949H3260L3252 1940ZM3252 1940H3261V1949" fill="none" stroke="#ccc" stroke-width="2.800"/>
<rect x="2167" y="1972" width="1203" height="5" fill="#3a3a3a"/>
<rect x="2168" y="1977" width="1201" height="19" fill="#4b4b4b"/>
<rect x="2166" y="1996" width="1204" height="3.500" fill="#3d3d3d"/>
<path d="M2739 1986H2796" stroke="#3a3a3a" stroke-width="13" stroke-dasharray="2.500 2.700" fill="none"/>

<!-- taskbar -->
<rect y="2023" width="3834" height="37" fill="#000"/>
<path d="M3255 2060L3270 2023M3290 2060L3305 2023M3330 2060L3350 2023M3400 2060L3415 2023M3460 2060L3478 2023" stroke="#141414" stroke-width="2"/>
<rect x="3651" y="2023" width="183" height="37" fill="#0a2227"/>
<path d="M3680 2060L3690 2023M3730 2060L3745 2023M3780 2060L3790 2023" stroke="#14353b" stroke-width="3"/>
<rect x="138" y="2023" width="1031" height="37" fill="#f1f1f1"/>
<circle cx="199" cy="2074" r="23" fill="#111" stroke="#8a8a8a" stroke-width="3"/>
<rect x="1103" y="2058" width="15" height="2" fill="#222"/>
<path d="M1382 2060L1394 2051L1406 2060Z" fill="#fff"/>
<ellipse cx="1542" cy="2068" rx="21" ry="17" fill="#0f7be0"/>
<ellipse cx="1688" cy="2068" rx="24" ry="19" fill="#e0554d"/>
<ellipse cx="1836" cy="2066" rx="13" ry="19" fill="none" stroke="#fff" stroke-width="3"/>
<path d="M1952 2047L1982 2056L2013 2047V2060H1952Z" fill="#c6302c"/>
<path d="M2100 2060L2104 2056H2122L2126 2060Z" fill="#f6c343"/>
<rect x="2205" y="2023" width="144" height="37" fill="#333"/>
<rect x="2245" y="2048" width="66" height="16" fill="#00202f" stroke="#1cb5e8" stroke-width="3.500"/>
<rect x="2709" y="2053" width="147" height="7" fill="#fff"/>
<rect x="2722" y="2059" width="120" height="1" fill="#999"/>
<text x="3514" y="2068" textLength="124" lengthAdjust="spacingAndGlyphs" style="font-size:33px;fill:#fff">1:51 PM</text>
<rect x="3716" y="2058" width="44" height="2" fill="#fff"/>
</svg>
</body></html>
